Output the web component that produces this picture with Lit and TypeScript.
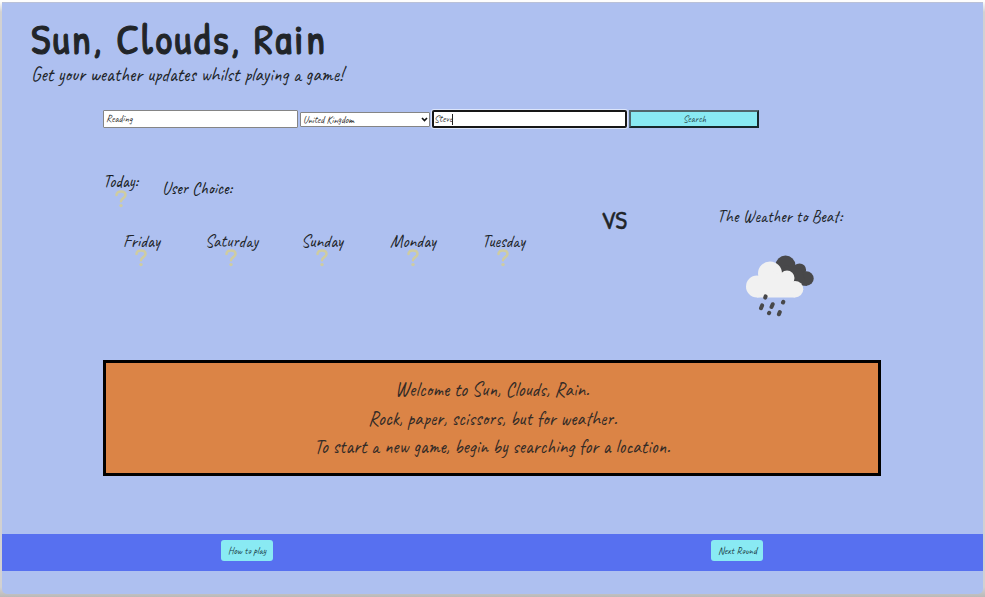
import { LitElement, html, css, svg } from "lit";
import { customElement, property } from "lit/decorators.js";

/** One line of lettering fitted to a set width. */
@customElement("ink-text")
class InkText extends LitElement {
  @property() text = "";
  @property() fit = "spacingAndGlyphs";
  @property({ type: Number }) width = 100;
  @property({ type: Number }) height = 20;
  @property({ type: Number }) base = 15;
  static styles = css`
    :host { display: block; flex: none; }
    svg { display: block; overflow: visible; }
    text { fill: currentColor; }
  `;
  render() {
    return html`<svg width=${this.width} height=${this.height}>
      ${svg`<text x="0" y=${this.base} textLength=${this.width} lengthAdjust=${this.fit}>${this.text}</text>`}
    </svg>`;
  }
}

@customElement("unknown-mark")
class UnknownMark extends LitElement {
  static styles = css`
    :host { display: block; width: 12px; height: 18px; }
    svg { display: block; }
  `;
  render() {
    return html`<svg width="12" height="18" viewBox="0 0 12 18">
      <path d="M1.5 5.1C1.5 2.4 3.6 1.4 6 1.4C8.9 1.4 10.5 2.9 10.5 5C10.5 8.2 6.1 8 6 11.3" fill="none" stroke="#cfcca0" stroke-width="2.5" stroke-linecap="round"/>
      <circle cx="6" cy="15.6" r="1.7" fill="#cfcca0"/>
    </svg>`;
  }
}

@customElement("rain-cloud")
class RainCloud extends LitElement {
  static styles = css`
    :host { display: block; }
    svg { display: block; }
  `;
  render() {
    return html`<svg width="70" height="64" viewBox="0 0 70 64">
      <g fill="#48484a">
        <circle cx="39.5" cy="10.5" r="10"/><circle cx="53.5" cy="15" r="6.6"/><circle cx="60.5" cy="23.5" r="7.2"/>
        <path d="M38 10L55 14L61 30.7L45 30.5Z"/>
      </g>
      <g fill="#f1f1f1">
        <circle cx="11" cy="31.5" r="11"/><circle cx="24" cy="18.5" r="12"/><circle cx="41" cy="23" r="7.5"/><circle cx="49" cy="34.2" r="8.3"/>
        <path d="M11 42.5V25L22 15L36 20L47 24L49 42.5Z"/>
      </g>
      <g stroke="#48484a" stroke-width="4" stroke-linecap="round">
        <path d="M19.6 41.4L19.2 42.6M16.1 50.4L15 53.2M26.7 49.2L25.5 52M37.3 46.9L37 47.5M23.2 57.8L23 58.2M33.8 57L32.9 59.3"/>
      </g>
    </svg>`;
  }
}

const DAYS = [
  { name: "Friday", width: 37 },
  { name: "Saturday", width: 53 },
  { name: "Sunday", width: 42 },
  { name: "Monday", width: 46 },
  { name: "Tuesday", width: 43 },
];

@customElement("app-root")
class AppRoot extends LitElement {
  static styles = css`
    * { box-sizing: border-box; }
    :host {
      display: block; width: 985px; height: 597px; overflow: hidden;
      background: #c7c6c6; color: #212529;
      font: 400 18px Caveat, Lato, sans-serif;
    }
    .window {
      height: 597px; padding: 0 2px 3px; border-top: 2px solid #fdfdfd;
      background: linear-gradient(#fafafa, #d2d1d1 10px, #d2d1d1 585px, #b9b9b9);
    }
    .page {
      height: 592px; display: flex; flex-direction: column; background: #aec0f0;
      border-top: 1px solid #bac1d8; border-radius: 0 0 5px 5px;
    }
    header { padding: 20px 0 0 29px; }
    .title { font: 400 42px "Patrick Hand", Lato, sans-serif; stroke: currentColor; stroke-width: 1.1; stroke-linejoin: round; }
    .tagline { font-size: 20px; }
    form { display: flex; align-items: center; gap: 2px; height: 18px; margin: 23px 0 0 101px; }
    input, select, .search {
      display: block; margin: 0; color: #333; font: 400 10px Caveat, Lato, sans-serif;
      border: 1px solid #858585; border-radius: 1px; background: #fff; outline: none;
    }
    input { width: 195px; height: 18px; padding: 0 2px 1px; }
    .pick { position: relative; width: 130px; }
    select { appearance: none; width: 130px; height: 15px; padding: 0 2px 1px; letter-spacing: -0.1px; }
    .pick svg { position: absolute; right: 2px; top: 5px; }
    .player { position: relative; width: 195px; }
    .player input { border: 2px solid #171717; border-radius: 2px; padding: 0 1px 1px 0; box-shadow: 0 0 0 1px #dce5fb; }
    .caret { position: absolute; left: 20px; top: 4px; width: 1px; height: 11px; background: #222; }
    .search {
      width: 130px; height: 18px; padding: 0; background: #89eaf3; color: #294b50;
      border: 2px solid; border-color: #50666b #17282c #17282c #50666b; border-radius: 0;
      display: grid; place-items: center;
    }
    .board { display: grid; grid-template-columns: 454px 90px 1fr; height: 232px; padding-left: 94px; }
    .now { display: flex; height: 102px; padding: 45px 0 0 7px; color: #171b20; font-weight: 500; }
    .today { width: 59px; }
    .today unknown-mark { margin: -3px 0 0 12px; }
    .choice { padding-top: 7px; }
    .days { display: grid; grid-template-columns: repeat(5, 90.6px); }
    .day { display: flex; flex-direction: column; align-items: center; padding-top: 2px; }
    .day unknown-mark { margin: -3px 1px 0 0; }
    .vs { padding: 80px 0 0 51px; font: 400 26px "Patrick Hand", Lato, sans-serif; stroke: currentColor; stroke-width: .4; }
    .beat { padding: 79px 0 0 77px; }
    .beat rain-cloud { margin: 28px 0 0 29px; }
    .message {
      height: 116px; width: 778px; margin-left: 101px; padding: 16px 0 0; border: 3px solid #000;
      background: #db8446; display: flex; flex-direction: column; align-items: center; gap: 8.7px; color: #332b27;
      font-size: 20px;
    }
    footer { display: flex; justify-content: space-between; height: 37px; margin-top: 58px; padding: 6px 220px 0 219px; background: #5770f0; }
    .pill {
      width: 52px; height: 21px; padding: 0; border: 0; border-radius: 3px; background: #89eaf3; color: #1c4148;
      display: grid; place-items: center; font: 400 10.5px Caveat, Lato, sans-serif;
    }
  `;
  render() {
    return html`<div class="window"><div class="page">
      <header>
        <ink-text class="title" fit="spacing" text="Sun, Clouds, Rain" .width=${294} .height=${42} .base=${31}></ink-text>
        <ink-text class="tagline" text="Get your weather updates whilst playing a game!" .width=${312} .height=${22} .base=${16}></ink-text>
      </header>
      <form @submit=${(e: Event) => e.preventDefault()}>
        <input .value=${"Reading"} aria-label="Location" />
        <div class="pick">
          <select aria-label="Country"><option>United Kingdom</option></select>
          <svg width="7" height="5" viewBox="0 0 7 5"><path d="M1 1L3.5 3.6L6 1" fill="none" stroke="#111" stroke-width="1.6"/></svg>
        </div>
        <div class="player"><input .value=${"Steve"} aria-label="Name" /><span class="caret"></span></div>
        <button class="search"><ink-text text="Search" .width=${23} .height=${12} .base=${9}></ink-text></button>
      </form>
      <div class="board">
        <div>
          <div class="now">
            <div class="today"><ink-text text="Today:" .width=${35} .height=${20} .base=${14}></ink-text><unknown-mark></unknown-mark></div>
            <ink-text class="choice" text="User Choice:" .width=${70} .height=${20} .base=${14}></ink-text>
          </div>
          <div class="days">
            ${DAYS.map((d) => html`<div class="day"><ink-text .text=${d.name} .width=${d.width} .height=${20} .base=${15}></ink-text><unknown-mark></unknown-mark></div>`)}
          </div>
        </div>
        <ink-text class="vs" text="VS" .width=${26} .height=${24} .base=${21}></ink-text>
        <div class="beat">
          <ink-text text="The Weather to Beat:" .width=${125} .height=${20} .base=${15}></ink-text>
          <rain-cloud></rain-cloud>
        </div>
      </div>
      <section class="message">
        <ink-text text="Welcome to Sun, Clouds, Rain." .width=${194} .height=${20} .base=${17}></ink-text>
        <ink-text text="Rock, paper, scissors, but for weather." .width=${249} .height=${20} .base=${17}></ink-text>
        <ink-text text="To start a new game, begin by searching for a location." .width=${356} .height=${20} .base=${17}></ink-text>
      </section>
      <footer>
        <button class="pill"><ink-text text="How to play" .width=${38} .height=${13} .base=${10}></ink-text></button>
        <button class="pill"><ink-text text="Next Round" .width=${39} .height=${13} .base=${10}></ink-text></button>
      </footer>
    </div></div>`;
  }
}
